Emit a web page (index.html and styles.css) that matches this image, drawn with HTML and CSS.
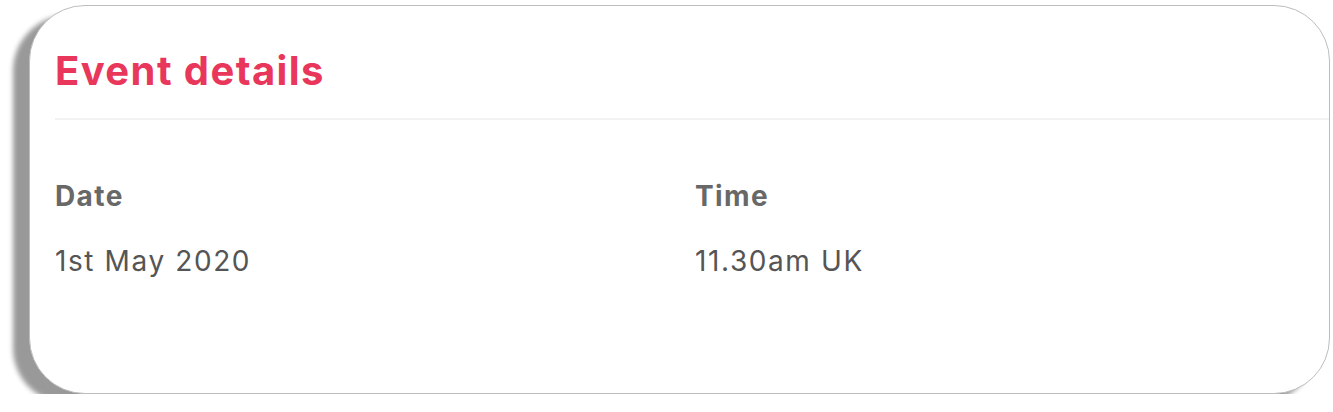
FILE: index.html
```html
<!DOCTYPE html>
<html>
<head>
<meta charset="utf-8">
<link rel="stylesheet" href="styles.css">
</head>
<body>
<section class="card">
  <header class="card-header">
    <h2 class="title">Event details</h2>
  </header>
  <div class="details">
    <div class="field">
      <div class="label">Date</div>
      <div class="value">1st May 2020</div>
    </div>
    <div class="field">
      <div class="label">Time</div>
      <div class="value">11.30am UK</div>
    </div>
  </div>
</section>
</body>
</html>
```
FILE: styles.css
```css
html, body {
  margin: 0;
  padding: 0;
  background: #ffffff;
}
body {
  font-family: Inter, "Noto Sans", sans-serif;
  padding: 5px 3px 0 29px;
}
.card {
  box-sizing: border-box;
  height: 389px;
  background: #ffffff;
  border: 1.5px solid #bdbdbd;
  border-radius: 56px;
  box-shadow: -16px 10px 5px rgba(0, 0, 0, 0.4);
  padding-left: 25px;
  overflow: hidden;
}
.card-header {
  border-bottom: 2px solid #f2f2f2;
  height: 113.5px;
  box-sizing: border-box;
  padding-top: 41px;
}
.title {
  margin: 0;
  font-size: 40px;
  line-height: 48px;
  font-weight: 700;
  color: #e8375b;
  letter-spacing: 1.4px;
}
.details {
  display: grid;
  grid-template-columns: 640px 1fr;
  padding-top: 59px;
}
.label {
  font-size: 28px;
  line-height: 34px;
  font-weight: 700;
  color: #686868;
  letter-spacing: 1.4px;
}
.value {
  margin-top: 31px;
  font-size: 28px;
  line-height: 34px;
  font-weight: 400;
  color: #555555;
  letter-spacing: 1.6px;
}
```
